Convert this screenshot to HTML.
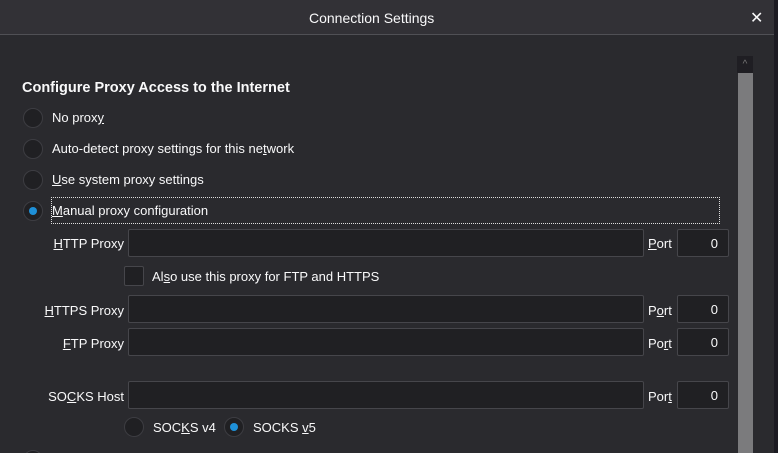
<!DOCTYPE html>
<html style="width:778px;height:453px;overflow:hidden"><head><meta charset="utf-8"><style>
*{margin:0;padding:0;box-sizing:border-box}
body{width:778px;height:453px;overflow:hidden;background:#2a2a2e;font-family:"Liberation Sans",sans-serif;color:#f9f9fa;font-size:13px;position:relative}
.hdr{position:absolute;left:0;top:0;width:774px;height:35px;background:#323136;border-bottom:1px solid #505055}
.title{position:absolute;left:309px;top:10px;font-size:14px}
.x{position:absolute;left:750px;top:8px;font-size:16px}
.edge{position:absolute;left:774px;top:0;width:4px;height:453px;background:#1c1b22}
.a{position:absolute;white-space:nowrap}
.l{position:absolute;white-space:nowrap;right:654px;text-align:right}
.r{position:absolute;width:20px;height:20px;border-radius:50%;background:#202023;border:1px solid #3d3d42}
.r.on::after{content:"";position:absolute;left:5px;top:5px;width:8px;height:8px;border-radius:50%;background:#1e90d8}
.in{position:absolute;height:28px;background:#202023;border:1px solid #46464b;border-radius:2px}
.pt{position:absolute;height:28px;width:52px;background:#202023;border:1px solid #46464b;border-radius:2px;text-align:right;padding:6px 10px 0 0}
u{text-decoration:underline}
</style></head><body>
<div class="hdr"><div class="title">Connection Settings</div><div class="x">✕</div></div>
<div class="edge"></div>
<div style="position:absolute;left:737px;top:56px;width:16px;height:17px;background:#1f1e23;color:#777;font-size:10px;text-align:center;line-height:17px">^</div>
<div style="position:absolute;left:738px;top:73px;width:15px;height:380px;background:#7b7b7d"></div>
<div class="a" style="left:22px;top:80px;font-size:14.5px;font-weight:bold">Configure Proxy Access to the Internet</div>
<div class="r" style="left:23px;top:108px"></div><div class="a" style="left:52px;top:110px">No prox<u>y</u></div>
<div class="r" style="left:23px;top:139px"></div><div class="a" style="left:52px;top:141px">Auto-detect proxy settings for this ne<u>t</u>work</div>
<div class="r" style="left:23px;top:170px"></div><div class="a" style="left:52px;top:172px"><u>U</u>se system proxy settings</div>
<div class="r on" style="left:23px;top:201px"></div>
<div style="position:absolute;left:51px;top:197px;width:669px;height:27px;border:1px dotted #ddd"></div>
<div class="a" style="left:52px;top:203px"><u>M</u>anual proxy configuration</div>
<div class="l" style="top:236px"><u>H</u>TTP Proxy</div>
<div class="in" style="left:128px;top:229px;width:516px"></div>
<div class="a" style="left:648px;top:236px"><u>P</u>ort</div><div class="pt" style="left:677px;top:229px">0</div>
<div style="position:absolute;left:124px;top:266px;width:20px;height:20px;background:#202023;border:1px solid #46464b;border-radius:2px"></div>
<div class="a" style="left:152px;top:269px">Al<u>s</u>o use this proxy for FTP and HTTPS</div>
<div class="l" style="top:303px"><u>H</u>TTPS Proxy</div>
<div class="in" style="left:128px;top:295px;width:516px"></div>
<div class="a" style="left:648px;top:303px">P<u>o</u>rt</div><div class="pt" style="left:677px;top:295px">0</div>
<div class="l" style="top:336px"><u>F</u>TP Proxy</div>
<div class="in" style="left:128px;top:328px;width:516px"></div>
<div class="a" style="left:648px;top:336px">Po<u>r</u>t</div><div class="pt" style="left:677px;top:328px">0</div>
<div class="l" style="top:389px">SO<u>C</u>KS Host</div>
<div class="in" style="left:128px;top:381px;width:516px"></div>
<div class="a" style="left:648px;top:389px">Por<u>t</u></div><div class="pt" style="left:677px;top:381px">0</div>
<div class="r" style="left:124px;top:417px"></div><div class="a" style="left:153px;top:420px">SOC<u>K</u>S v4</div>
<div class="r on" style="left:224px;top:417px"></div><div class="a" style="left:253px;top:420px">SOCKS <u>v</u>5</div>
<div style="position:absolute;left:23px;top:450px;width:20px;height:3px;overflow:hidden"><div class="r" style="left:0;top:0"></div></div>
</body></html>
